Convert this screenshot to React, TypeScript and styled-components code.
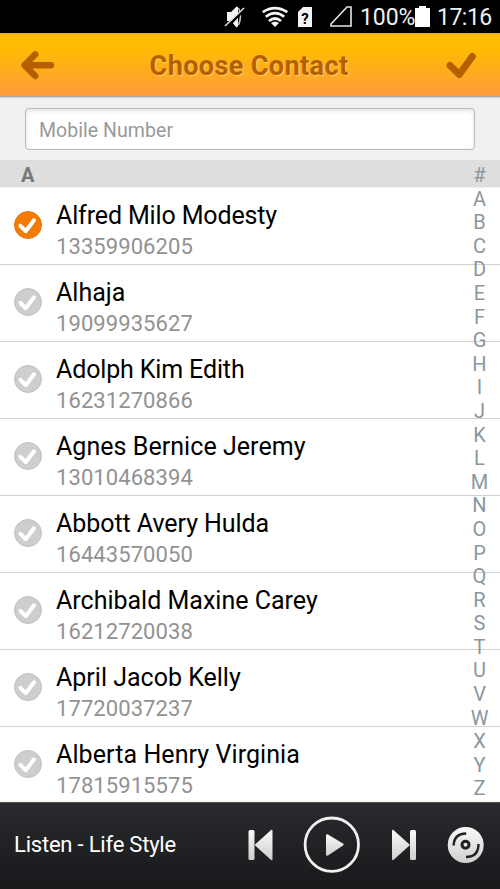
import React, { useState } from 'react';
import styled, { createGlobalStyle } from 'styled-components';

const GlobalStyle = createGlobalStyle`
  * { box-sizing: border-box; }
  body { margin: 0; background: #fff; }
  button { border: 0; padding: 0; background: none; display: block; cursor: pointer; }
  svg { display: block; overflow: visible; }
`;

const Screen = styled.div`
  position: relative;
  display: flex;
  flex-direction: column;
  width: 500px;
  height: 889px;
  overflow: hidden;
  background: #fff;
  font-family: Roboto, "Liberation Sans", sans-serif;
`;

const StatusBar = styled.div`
  display: flex;
  flex: none;
  justify-content: flex-end;
  height: 33px;
  padding-right: 8px;
  background: #000;
  color: #f0f0f0;
`;

const StatusText = styled.span<{ $width: number; $spacing: number }>`
  width: ${p => p.$width}px;
  font-size: 23px;
  line-height: 35px;
  letter-spacing: ${p => p.$spacing}px;
  white-space: nowrap;
`;

const Header = styled.header`
  display: flex;
  flex: none;
  align-items: center;
  justify-content: space-between;
  height: 64px;
  padding: 0 23px 0 20px;
  border-top: 1px solid #e9a53a;
  border-bottom: 1px solid #aaa8a5;
  background: linear-gradient(#ffbf00, #ffbb04 25%, #ff9b3d);
  box-shadow: 0 1px 1px #d4d4d4;
  z-index: 1;
`;

const Title = styled.h1`
  margin: 0 3px 0 0;
  padding-top: 2px;
  color: #b46000;
  font-size: 27px;
  font-weight: 700;
  letter-spacing: 0.4px;
  line-height: 60px;
  text-shadow: 1px 1px 1px rgba(255, 222, 130, 0.75);
`;

const SearchArea = styled.div`
  flex: none;
  height: 63px;
  padding: 11px 25px 0;
  background: #f0f0f0;
`;

const SearchInput = styled.input`
  display: block;
  width: 450px;
  height: 42px;
  padding: 2px 13px 0;
  border: 1px solid #b9b9b9;
  border-radius: 4px;
  outline: 0;
  background: #fff;
  box-shadow: inset 0 2px 4px #e4e4e4;
  font: 400 19.5px/38px Roboto, sans-serif;
  letter-spacing: 0.05px;
  color: #333;
  &::placeholder { color: #999; opacity: 1; }
`;

const SectionTitle = styled.div`
  flex: none;
  height: 28px;
  padding-left: 21px;
  border-bottom: 1px solid #f1f1f1;
  background: #dedede;
  color: #777;
  font-size: 20px;
  font-weight: 700;
  line-height: 31px;
`;

const ContactList = styled.ul`
  flex: none;
  height: 614px;
  margin: 0;
  padding: 0;
  overflow: hidden;
  list-style: none;
`;

const ContactRow = styled.li`
  display: flex;
  align-items: flex-start;
  gap: 14px;
  height: 77px;
  padding: 23px 0 0 14px;
  border-bottom: 1px solid #d2d2d2;
`;

const ContactText = styled.div`
  margin-top: -11px;
`;

const Name = styled.div<{ $spacing: number }>`
  height: 31px;
  color: #000;
  font-size: 25px;
  line-height: 31px;
  letter-spacing: ${p => p.$spacing}px;
  white-space: nowrap;
`;

const Phone = styled.div`
  height: 31px;
  color: #929292;
  font-size: 22px;
  line-height: 31px;
  letter-spacing: 0.08px;
`;

const IndexRail = styled.nav`
  position: absolute;
  top: 164px;
  right: 0;
  width: 41px;
  color: #8997a1;
  font-size: 20px;
  line-height: 23.6px;
  text-align: center;
`;

const Player = styled.footer`
  display: flex;
  flex: 1;
  align-items: center;
  padding-bottom: 2px;
  border-top: 1px solid #55564f;
  box-shadow: 0 -1px 0 #f0f2ea;
  background: linear-gradient(#292a2d, #18191b);
  z-index: 1;
`;

const Track = styled.span`
  width: 247px;
  padding-left: 14px;
  color: #fff;
  font-size: 22px;
  letter-spacing: -0.21px;
  line-height: 30px;
  white-space: nowrap;
`;

const Controls = styled.div`
  display: flex;
  align-items: center;
`;

const StatusIcons = () => (
  <svg width="144" height="33" viewBox="216 0 144 33" fill="#f4f4f4">
    <path d="M227 12h4l5-5q1-1 2 0v19q-1 2-2 1l-5-6h-4z" />
    <path d="M238.500 8q4 8 0 17" fill="none" stroke="#ccc" strokeWidth="1.500" />
    <path d="M227 27 245 9" stroke="#000" strokeWidth="2.500" />
    <path d="M225 26 244 8" stroke="#ddd" strokeWidth="1.600" />
    <g fill="none" stroke="#f5f5f5" strokeWidth="2.700">
      <path d="M262.700 12.200q12.300-8 24.600 0" />
      <path d="M265.800 16.700q9.200-7 18.400 0" />
      <path d="M269 21q6-5 12 0" />
    </g>
    <path d="M271 23q4-3 8 0l-4 4z" />
    <path d="M303 7h9v20h-14V12z" />
    <text x="305" y="23.500" fill="#000" fontFamily="Roboto" fontWeight="700" fontSize="15" textAnchor="middle">?</text>
    <path d="M351 7v19h-20v-2l16-17z" fill="none" stroke="#e8e8e8" strokeWidth="1.600" />
  </svg>
);

const BatteryIcon = () => (
  <svg width="22" height="33" viewBox="0 0 22 33">
    <path d="M0 8h4V6h7v2h4v19H0z" fill="#fff" />
  </svg>
);

const BackIcon = () => (
  <svg width="36" height="32" viewBox="0 0 36 32">
    <path d="M15.300 5.300 4.500 16.200l10.800 10.900M6 16.200h25" fill="none" stroke="#b46000" strokeWidth="6.400" strokeLinecap="round" strokeLinejoin="round" />
  </svg>
);

const ConfirmIcon = () => (
  <svg width="32" height="32" viewBox="0 0 32 32">
    <path d="M5 16.500 14.300 25.500 27.300 7.500" fill="none" stroke="#b46000" strokeWidth="7" strokeLinecap="round" strokeLinejoin="round" />
  </svg>
);

const CheckIcon = ({ checked }: { checked: boolean }) => (
  <svg width="28" height="28" viewBox="0 0 28 28">
    <circle cx="14" cy="14" r="13.500" fill={checked ? '#f27c05' : '#cecece'} stroke={checked ? '#df7914' : '#c1c1c1'} />
    <path d="m6.500 14.800 5.200 5.400L20 9.300" fill="none" stroke="#fff" strokeWidth="4" strokeLinecap="round" strokeLinejoin="round" />
  </svg>
);

const PlayerIcons = () => (
  <svg width="240" height="60" viewBox="247 815 240 60">
    <defs>
      <linearGradient id="silver" x1="0" y1="0" x2="0" y2="1">
        <stop stopColor="#fafafa" />
        <stop offset="1" stopColor="#cecece" />
      </linearGradient>
    </defs>
    <rect x="248.500" y="830" width="6" height="30" rx="1.500" fill="url(#silver)" />
    <path d="M254.500 845 270.500 830.500q2-1.500 2 .5v28q0 2-2 .5z" fill="url(#silver)" />
    <circle cx="331.800" cy="844.700" r="26.700" fill="none" stroke="#f0f0f0" strokeWidth="2.800" />
    <path d="M326 835.500q0-2 2-1l15 9q1.500 1 0 2l-15 10q-2 1-2-1z" fill="url(#silver)" />
    <path d="M410 845 394 830.500q-2-1.500-2 .5v28q0 2 2 .5z" fill="url(#silver)" />
    <rect x="410" y="830" width="6" height="30" rx="1.500" fill="url(#silver)" />
    <circle cx="465.700" cy="845" r="18" fill="url(#silver)" />
    <g fill="none" stroke="#202123" strokeWidth="2.400">
      <circle cx="465.500" cy="844.800" r="3.500" strokeWidth="3" />
      <path d="M453.700 845.500q0-11.500 12.500-12M478.500 844q0 13-12.500 13" />
    </g>
  </svg>
);

const contacts = [
  { name: 'Alfred Milo Modesty', phone: '13359906205', spacing: -0.14 },
  { name: 'Alhaja', phone: '19099935627', spacing: 0 },
  { name: 'Adolph Kim Edith', phone: '16231270866', spacing: -0.14 },
  { name: 'Agnes Bernice Jeremy', phone: '13010468394', spacing: 0.05 },
  { name: 'Abbott Avery Hulda', phone: '16443570050', spacing: -0.06 },
  { name: 'Archibald Maxine Carey', phone: '16212720038', spacing: 0 },
  { name: 'April Jacob Kelly', phone: '17720037237', spacing: 0 },
  { name: 'Alberta Henry Virginia', phone: '17815915575', spacing: 0.08 },
];

export default function App() {
  const [selected, setSelected] = useState(0);
  return (
    <>
      <GlobalStyle />
      <Screen>
        <StatusBar>
          <StatusIcons />
          <StatusText $width={55} $spacing={-0.1}>100%</StatusText>
          <BatteryIcon />
          <StatusText $width={55} $spacing={-0.5}>17:16</StatusText>
        </StatusBar>
        <Header>
          <button aria-label="Back"><BackIcon /></button>
          <Title>Choose Contact</Title>
          <button aria-label="Confirm"><ConfirmIcon /></button>
        </Header>
        <SearchArea>
          <SearchInput placeholder="Mobile Number" />
        </SearchArea>
        <SectionTitle>A</SectionTitle>
        <ContactList>
          {contacts.map(({ name, phone, spacing }, i) => (
            <ContactRow key={phone}>
              <button aria-label={name} onClick={() => setSelected(i)}>
                <CheckIcon checked={selected === i} />
              </button>
              <ContactText>
                <Name $spacing={spacing}>{name}</Name>
                <Phone>{phone}</Phone>
              </ContactText>
            </ContactRow>
          ))}
        </ContactList>
        <IndexRail>
          {'#ABCDEFGHIJKLMNOPQRSTUVWXYZ'.split('').map(letter => (
            <div key={letter}>{letter}</div>
          ))}
        </IndexRail>
        <Player>
          <Track>Listen - Life Style</Track>
          <Controls><PlayerIcons /></Controls>
        </Player>
      </Screen>
    </>
  );
}
